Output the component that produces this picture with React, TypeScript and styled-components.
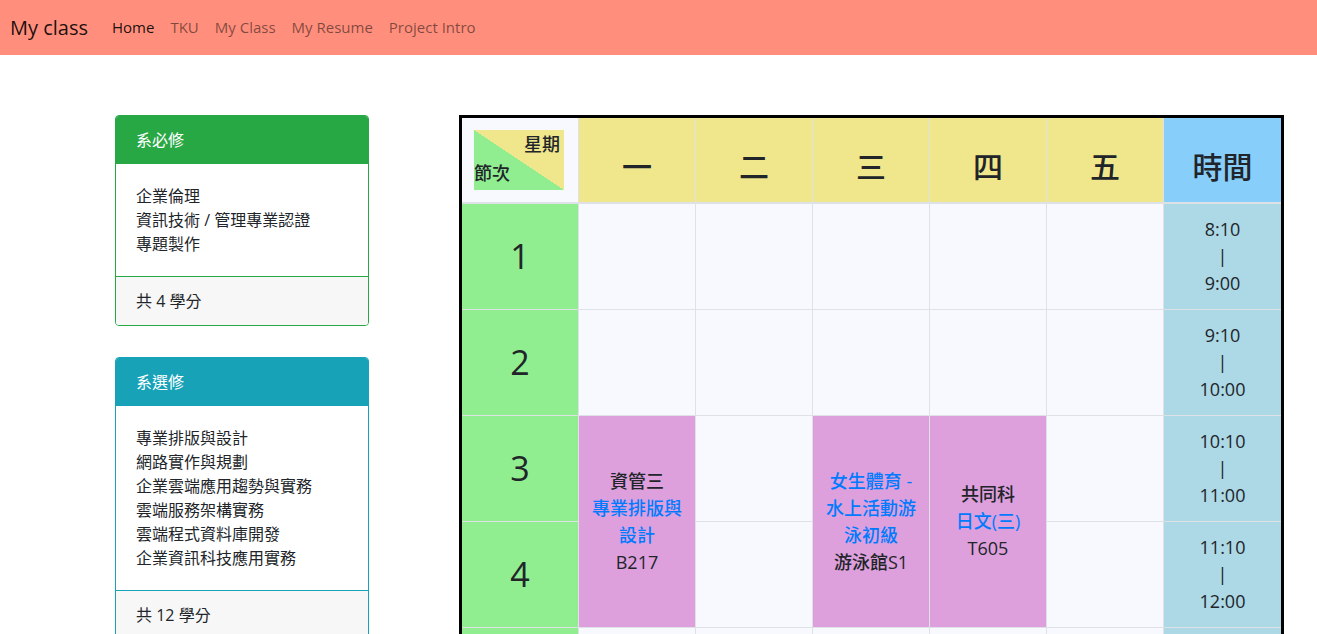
import styled, { createGlobalStyle } from 'styled-components';

const GlobalStyle = createGlobalStyle`
  body {
    margin: 0;
    font-family: "Open Sans", "Noto Sans CJK TC", sans-serif;
    font-size: 16px;
    line-height: 1.5;
    color: #212529;
    background: #fff;
  }
`;

const required = ['企業倫理', '資訊技術 / 管理專業認證', '專題製作'];
const elective = [
  '專業排版與設計',
  '網路實作與規劃',
  '企業雲端應用趨勢與實務',
  '雲端服務架構實務',
  '雲端程式資料庫開發',
  '企業資訊科技應用實務',
];

const days = ['一', '二', '三', '四', '五'];

const periods = [
  ['8:10', '9:00'],
  ['9:10', '10:00'],
  ['10:10', '11:00'],
  ['11:10', '12:00'],
  ['12:10', '13:00'],
];

interface Course {
  day: number;
  start: number;
  span: number;
  top?: string;
  name: string;
  room: string;
}

const courses: Course[] = [
  { day: 0, start: 2, span: 2, top: '資管三', name: '專業排版與設計', room: 'B217' },
  { day: 2, start: 2, span: 2, name: '女生體育 - 水上活動游泳初級', room: '游泳館S1' },
  { day: 3, start: 2, span: 2, top: '共同科', name: '日文(三)', room: 'T605' },
];

export default function App() {
  return (
    <>
      <GlobalStyle />
      <Navbar>
        <Brand href="#">My class</Brand>
        <NavLink href="#" $active>Home</NavLink>
        <NavLink href="#">TKU</NavLink>
        <NavLink href="#">My Class</NavLink>
        <NavLink href="#">My Resume</NavLink>
        <NavLink href="#">Project Intro</NavLink>
      </Navbar>
      <Main>
        <Side>
          <CreditCard title="系必修" color="#28a745" items={required} credits={4} />
          <CreditCard title="系選修" color="#17a2b8" items={elective} credits={12} />
        </Side>
        <Schedule>
          <colgroup>
            {Array.from({ length: 7 }).map((_, i) => <col key={i} />)}
          </colgroup>
          <thead>
            <tr>
              <CornerCell>
                <Corner>
                  <CornerTop>星期</CornerTop>
                  <CornerBottom>節次</CornerBottom>
                </Corner>
              </CornerCell>
              {days.map(d => <DayHead key={d}>{d}</DayHead>)}
              <DayHead $time>時間</DayHead>
            </tr>
          </thead>
          <tbody>
            {periods.map((p, r) => (
              <tr key={r}>
                <PeriodCell>{r + 1}</PeriodCell>
                {days.map((_, d) => {
                  const c = courses.find(x => x.day === d && r >= x.start && r < x.start + x.span);
                  if (!c) return <Cell key={d} />;
                  if (c.start !== r) return null;
                  return (
                    <CourseCell key={d} rowSpan={c.span}>
                      {c.top && <div>{c.top}</div>}
                      <CourseLink href="#">{c.name}</CourseLink>
                      <div>{c.room}</div>
                    </CourseCell>
                  );
                })}
                <TimeCell>
                  {p[0]}<br />|<br />{p[1]}
                </TimeCell>
              </tr>
            ))}
          </tbody>
        </Schedule>
      </Main>
    </>
  );
}

function CreditCard(props: { title: string, color: string, items: string[], credits: number }) {
  return (
    <Card $color={props.color}>
      <CardHeader $color={props.color}>{props.title}</CardHeader>
      <CardBody>
        {props.items.map(t => <div key={t}>{t}</div>)}
      </CardBody>
      <CardFooter $color={props.color}>共 {props.credits} 學分</CardFooter>
    </Card>
  );
}

const Navbar = styled.nav`
  height: 55px;
  box-sizing: border-box;
  padding: 0 10px;
  display: flex;
  align-items: center;
  background: #ff8f7c;
`;

const Brand = styled.a`
  font-size: 20px;
  color: rgba(0, 0, 0, 0.9);
  text-decoration: none;
  margin-right: 16px;
`;

const NavLink = styled.a<{ $active?: boolean }>`
  font-size: 15px;
  padding: 0 8px;
  text-decoration: none;
  color: ${p => (p.$active ? 'rgba(0, 0, 0, 0.9)' : 'rgba(0, 0, 0, 0.5)')};
`;

const Main = styled.main`
  display: flex;
  align-items: flex-start;
  gap: 90px;
  padding: 60px 0 0 115px;
`;

const Side = styled.aside`
  width: 254px;
  flex-shrink: 0;
  display: flex;
  flex-direction: column;
  gap: 31px;
`;

const Card = styled.section<{ $color: string }>`
  border: 1px solid ${p => p.$color};
  border-radius: 4px;
  overflow: hidden;
  background: #fff;
`;

const CardHeader = styled.div<{ $color: string }>`
  background: ${p => p.$color};
  color: #fff;
  padding: 12px 20px;
`;

const CardBody = styled.div`
  padding: 20px;
`;

const CardFooter = styled.div<{ $color: string }>`
  border-top: 1px solid ${p => p.$color};
  background: #f7f7f7;
  padding: 12px 20px;
`;

const Schedule = styled.table`
  width: 825px;
  flex-shrink: 0;
  border: 3px solid #000;
  border-collapse: separate;
  border-spacing: 0;
  table-layout: fixed;
  text-align: center;
  font-size: 18px;
  line-height: 27px;

  th, td {
    padding: 12px;
    vertical-align: middle;
    border-right: 1px solid #dee2e6;
    border-bottom: 1px solid #dee2e6;
  }
  th:last-child, td:last-child {
    border-right: none;
  }
  th {
    border-bottom-width: 2px;
  }
`;

const CornerCell = styled.th`
  background: #f8f8ff;
`;

const Corner = styled.div`
  width: 90px;
  height: 60px;
  background: linear-gradient(to top right, #90ee90 50%, #f0e68c 50%);
  font-size: 18px;
  font-weight: 500;
  line-height: 29px;
`;

const CornerTop = styled.div`
  text-align: right;
  padding-right: 4px;
`;

const CornerBottom = styled.div`
  text-align: left;
`;

const DayHead = styled.th<{ $time?: boolean }>`
  background: ${p => (p.$time ? '#87cefa' : '#f0e68c')};
  font-size: 30px;
  font-weight: 500;
  line-height: 45px;
  && {
    padding-top: 24px;
  }
`;

const PeriodCell = styled.td`
  background: #90ee90;
  font-size: 34px;
  line-height: 51px;
`;

const Cell = styled.td`
  background: #f8f8ff;
`;

const CourseCell = styled.td`
  background: #dda0dd;
  font-weight: 500;
`;

const CourseLink = styled.a`
  display: block;
  color: #007bff;
  text-decoration: none;
`;

const TimeCell = styled.td`
  background: #add8e6;
`;
